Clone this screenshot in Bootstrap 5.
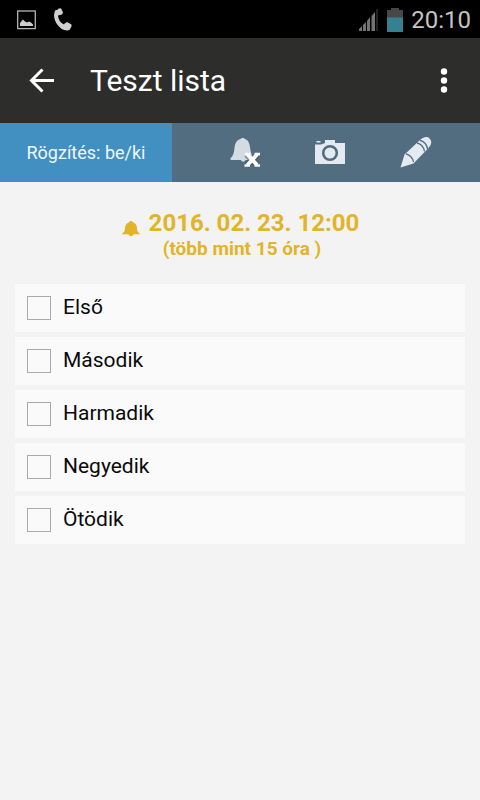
<!DOCTYPE html>
<html lang="hu">
<head>
<meta charset="utf-8">
<meta name="viewport" content="width=device-width, initial-scale=1">
<title>Teszt lista</title>
<link href="https://cdn.jsdelivr.net/npm/bootstrap@5.3.0/dist/css/bootstrap.min.css" rel="stylesheet">
<style>
body { background: #f3f3f3; color: #0a0a0a; font-family: Roboto, "Liberation Sans", sans-serif; }
svg { display: block; flex: none; }
.status-bar { height: 38px; background: #000; color: #c4c4c4; padding: 2px 9px 0 16px; }
.clock { font-size: 24px; line-height: 36px; margin-left: 8px; }
.app-bar { height: 85px; background: #2d2d2b; padding: 0 24px; }
.app-title { font-size: 30px; line-height: 36px; margin-left: 30px; }
.tool-bar { height: 59px; background: #526d80; }
.record-btn { width: 172px; background: #4190c1; color: #eef8ff; font-size: 18px; }
.tool-icons { padding: 0 21px 0 30px; }
.plain-btn { background: none; }
.reminder { color: #e1b42a; margin-top: 27px; margin-bottom: 24px; }
.reminder-date { font-size: 24px; line-height: 28px; }
.reminder-left { font-size: 19px; line-height: 23px; }
.task-list { gap: 5px; padding: 0 15px; }
.task { height: 48px; background: #fafafa; padding: 0 12px; gap: 12px; }
.task .form-check-input { width: 24px; height: 24px; border: 1px solid #aaa; border-radius: 0; background-color: #fafafa; }
.task .form-check-input:checked { background-color: #4190c1; }
.task-name { font-size: 21px; line-height: 26px; padding-bottom: 2px; }
</style>
<script src="https://cdn.jsdelivr.net/npm/bootstrap@5.3.0/dist/js/bootstrap.bundle.min.js" defer></script>
</head>
<body>
<div class="status-bar d-flex align-items-center">
  <svg width="21" height="20" viewBox="0 0 21 20" aria-hidden="true"><rect x="1.700" y="1" width="17.600" height="17.600" fill="none" stroke="#b5b5b5" stroke-width="1.300"/><path d="M4 16v-3l3-3.500 2 2 2 1 2-1 2 1 2 2V16z" fill="#cfcfcf"/></svg>
  <svg class="ms-3" width="20" height="24" viewBox="0 0 20 24" aria-hidden="true"><path d="M2 2.500 5 1.500 5 7c0 5 4 9.500 7 9.500l5 2-1.500 3.500C8.500 24 1 15 1 7z" fill="#cfcfcf"/><path d="m5 .8 3-.6 2 4.300L9 6.500l-4 1zM11 16l3-2 4.500 2.500v2L16.500 22l-3 .5z" fill="#cfcfcf"/></svg>
  <svg class="ms-auto" width="20" height="22" viewBox="0 0 20 22" aria-hidden="true"><path d="M17 0h2v22h-2z" fill="#222"/><path d="M0 22v-2l3-3v5zM4 22v-6l3-3v9zM8 22V12l3-4v14zM12.500 22V7L16 3v19z" fill="#747474"/></svg>
  <svg class="ms-2" width="16" height="24" viewBox="0 0 16 24" aria-hidden="true"><path d="M4 0h8v2h4v8H0V2h4z" fill="#484848"/><path d="M0 9.500h16V24H0z" fill="#348291"/></svg>
  <span class="clock">20:10</span>
</div>

<header class="app-bar d-flex align-items-center text-white">
  <button type="button" class="plain-btn btn border-0 p-0 text-white" aria-label="Vissza">
    <svg width="36" height="36" viewBox="0 0 36 36" fill="none" stroke="currentColor" stroke-width="3"><path d="M30 17.500H8M18.500 6.500 7.500 17.500l11 11"/></svg>
  </button>
  <h1 class="app-title fw-normal mb-0">Teszt lista</h1>
  <button type="button" class="plain-btn btn border-0 p-0 text-white ms-auto" aria-label="Menü">
    <svg width="24" height="36" viewBox="0 0 24 36" fill="currentColor"><circle cx="12" cy="8.500" r="3.200"/><circle cx="12" cy="17.500" r="3.200"/><circle cx="12" cy="26.500" r="3.200"/></svg>
  </button>
</header>

<div class="tool-bar d-flex" role="toolbar" aria-label="Lista eszközei">
  <button type="button" class="record-btn btn border-0 rounded-0 p-0">Rögzítés: be/ki</button>
  <div class="tool-icons d-flex flex-fill">
    <button type="button" class="plain-btn btn border-0 p-0 d-flex flex-fill align-items-center justify-content-center" aria-label="Emlékeztető törlése">
      <svg width="32" height="32" viewBox="0 0 32 32"><path d="M11.500 2C7.500 3 6 6.500 5.500 11 5 16 4 19 1.500 21.300V23h10.500c.3 2.200 4 2.200 4.500 0H24V20c-2-3-2.500-6-3-10-.5-4-2-7.300-5-8-.5-1.500-4-1.500-4.500 0z" fill="#d3dce2"/><path d="M17.500 17.500 28.500 29M28.500 17.500 17.500 29" stroke="#35485a" stroke-opacity=".5" stroke-width="6"/><path d="M18.500 17.500 28 28M28 17.500 18.500 28" stroke="#fff" stroke-width="4"/><path d="M16 15.800h5.500v2.600H16zM25.500 15.800H31v2.600h-5.500zM15.500 27.200H21v2.600h-5.500zM25.500 27.200H31v2.600h-5.500z" fill="#fff"/></svg>
    </button>
    <button type="button" class="plain-btn btn border-0 p-0 d-flex flex-fill align-items-center justify-content-center" aria-label="Fénykép">
      <svg width="32" height="32" viewBox="0 0 32 32"><path d="M2.500 4h4v1.500h-4zM11 3h10v3h10v21H1V7.500h6L11 6z" fill="#e3ebf0"/><circle cx="16" cy="16" r="6.800" fill="none" stroke="#526d80" stroke-width="2.600"/></svg>
    </button>
    <button type="button" class="plain-btn btn border-0 p-0 d-flex flex-fill align-items-center justify-content-center" aria-label="Szerkesztés">
      <svg width="34" height="34" viewBox="0 0 34 34"><path d="m1.500 31.500 4-13L20.500 4.500C24 1 28 0 30.500 2.500S33 8 29.500 12L14.500 27.500z" fill="#e3ebf0"/><path d="M7 18c3.500.5 7 4 7.500 8M18 7c3.500.5 7 4 7.500 8.500M21 4.500c3.800.5 7 4 7.500 8.500" fill="none" stroke="#526d80" stroke-width="1.300"/></svg>
    </button>
  </div>
</div>

<main>
  <section class="reminder d-flex justify-content-center fw-bold">
    <svg class="mt-2 me-2" width="20" height="24" viewBox="0 0 20 24" fill="currentColor" aria-hidden="true"><path d="M8.500 5c0-1.400 3-1.400 3 0 3 .8 4.500 3.500 4.500 6.500 0 2.500 1.200 4 3.500 5.800H.5C2.800 15.500 4 14 4 11.500 4 8.500 5.500 5.800 8.500 5zM7.500 17h5c-.5 3-4.500 3-5 0z"/></svg>
    <div>
      <div class="reminder-date">2016. 02. 23. 12:00</div>
      <div class="reminder-left text-center pe-4">(több mint 15 óra )</div>
    </div>
  </section>
  <ul class="task-list list-unstyled d-flex flex-column mb-0">
    <li><label class="task d-flex align-items-center"><input class="form-check-input m-0 flex-shrink-0" type="checkbox"><span class="task-name">Első</span></label></li>
    <li><label class="task d-flex align-items-center"><input class="form-check-input m-0 flex-shrink-0" type="checkbox"><span class="task-name">Második</span></label></li>
    <li><label class="task d-flex align-items-center"><input class="form-check-input m-0 flex-shrink-0" type="checkbox"><span class="task-name">Harmadik</span></label></li>
    <li><label class="task d-flex align-items-center"><input class="form-check-input m-0 flex-shrink-0" type="checkbox"><span class="task-name">Negyedik</span></label></li>
    <li><label class="task d-flex align-items-center"><input class="form-check-input m-0 flex-shrink-0" type="checkbox"><span class="task-name">Ötödik</span></label></li>
  </ul>
</main>
</body>
</html>
